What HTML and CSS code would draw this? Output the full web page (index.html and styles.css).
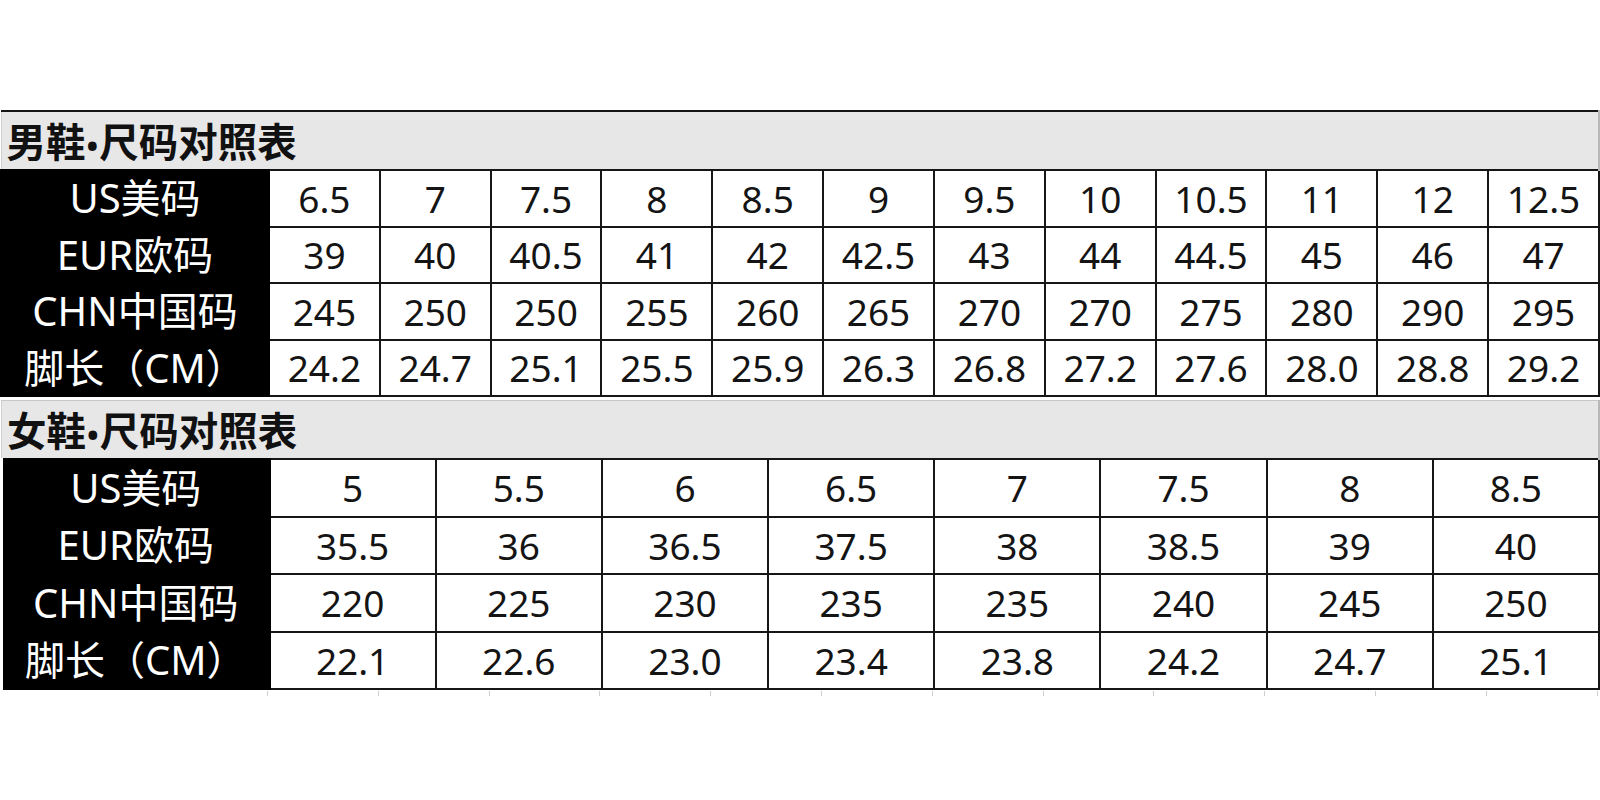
FILE: index.html
```html
<!DOCTYPE html>
<html lang="zh-CN">
<head>
<meta charset="utf-8">
<title>鞋码对照表</title>
<link rel="stylesheet" href="styles.css">
</head>
<body>
<main class="sheet">
  <table class="chart chart-men">
    <colgroup><col class="col-label"></colgroup>
    <thead>
      <tr class="title-row"><th colspan="13">男鞋<span class="dot">•</span>尺码对照表</th></tr>
    </thead>
    <tbody>
      <tr><th class="label">US美码</th><td>6.5</td><td>7</td><td>7.5</td><td>8</td><td>8.5</td><td>9</td><td>9.5</td><td>10</td><td>10.5</td><td>11</td><td>12</td><td>12.5</td></tr>
      <tr><th class="label">EUR欧码</th><td>39</td><td>40</td><td>40.5</td><td>41</td><td>42</td><td>42.5</td><td>43</td><td>44</td><td>44.5</td><td>45</td><td>46</td><td>47</td></tr>
      <tr><th class="label">CHN中国码</th><td>245</td><td>250</td><td>250</td><td>255</td><td>260</td><td>265</td><td>270</td><td>270</td><td>275</td><td>280</td><td>290</td><td>295</td></tr>
      <tr><th class="label">脚长（CM）</th><td>24.2</td><td>24.7</td><td>25.1</td><td>25.5</td><td>25.9</td><td>26.3</td><td>26.8</td><td>27.2</td><td>27.6</td><td>28.0</td><td>28.8</td><td>29.2</td></tr>
    </tbody>
  </table>
  <table class="chart chart-women">
    <colgroup><col class="col-label"></colgroup>
    <thead>
      <tr class="title-row"><th colspan="9">女鞋<span class="dot">•</span>尺码对照表</th></tr>
    </thead>
    <tbody>
      <tr><th class="label">US美码</th><td>5</td><td>5.5</td><td>6</td><td>6.5</td><td>7</td><td>7.5</td><td>8</td><td>8.5</td></tr>
      <tr><th class="label">EUR欧码</th><td>35.5</td><td>36</td><td>36.5</td><td>37.5</td><td>38</td><td>38.5</td><td>39</td><td>40</td></tr>
      <tr><th class="label">CHN中国码</th><td>220</td><td>225</td><td>230</td><td>235</td><td>235</td><td>240</td><td>245</td><td>250</td></tr>
      <tr><th class="label">脚长（CM）</th><td>22.1</td><td>22.6</td><td>23.0</td><td>23.4</td><td>23.8</td><td>24.2</td><td>24.7</td><td>25.1</td></tr>
    </tbody>
  </table>
  <div class="ticks"></div>
</main>
</body>
</html>
```
FILE: styles.css
```css
html, body {
  margin: 0;
  padding: 0;
  background: #ffffff;
}

.sheet {
  padding-top: 110px;
  width: 1600px;
}

.chart {
  width: 1600px;
  border-collapse: collapse;
  table-layout: fixed;
  font-family: "Noto Sans", "Noto Sans CJK SC", sans-serif;
  color: #141414;
}

.col-label {
  width: 268px;
}

.title-row th {
  height: 57px;
  padding: 0 0 0 5px;
  background: #e7e7e7;
  text-align: left;
  font-family: "Noto Sans CJK SC", sans-serif;
  font-weight: 700;
  font-size: 39.5px;
  line-height: 1;
  color: #111111;
  border-top: 2px solid #151515;
  border-left: 1px solid #d0d0d0;
  border-right: 2px solid #b8b8b8;
}

.chart-women .title-row th {
  border-top: 1px solid #c8c8c8;
}

.title-row .dot {
  font-family: "Noto Sans", sans-serif;
  font-weight: 700;
  font-size: 31px;
  margin: 0 1px;
}

.label {
  height: 54.5px;
  padding: 0;
  background: #000000;
  color: #ffffff;
  font-weight: 400;
  font-size: 40px;
  line-height: 1;
  text-align: center;
  border: 2px solid #000000;
  white-space: nowrap;
}

.chart td {
  height: 54.5px;
  padding: 0;
  background: #ffffff;
  font-size: 37px;
  line-height: 1;
  text-align: center;
  border: 2px solid #161616;
  white-space: nowrap;
}

.chart-women .label,
.chart-women td {
  height: 55.5px;
}

.chart-women {
  margin-top: 3px;
}

.chart-women th.label {
  border-left: 3px solid #ffffff;
}

.ticks {
  height: 5px;
  margin-top: 1px;
  margin-left: 267px;
  background: repeating-linear-gradient(90deg, #cfcfcf 0 1px, transparent 1px 110.8px);
}
```
